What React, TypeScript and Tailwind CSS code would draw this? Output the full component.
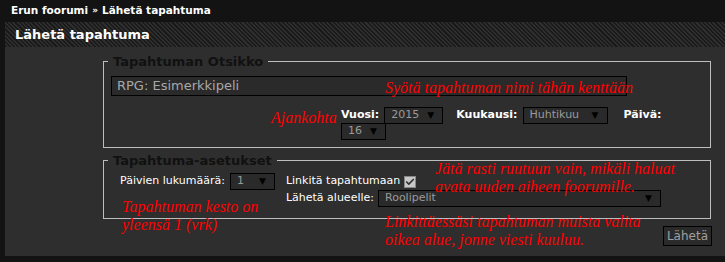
import { Check } from "lucide-react";

const SANS = "font-['DejaVu_Sans',Verdana,sans-serif]";
const NOTE = "absolute font-['Liberation_Serif',serif] italic text-[16px] leading-[18px] text-[#ff0000] whitespace-nowrap";

function Select({ value, width }: { value: string; width: string }) {
  return (
    <div
      className={`${width} h-[17px] flex items-center justify-between pl-1.5 pr-2 bg-[#2a2a2a] border border-black text-[11px] font-normal text-[#9a9a9a] ${SANS}`}
    >
      <span>{value}</span>
      <span className="text-[9px] text-black">▼</span>
    </div>
  );
}

export default function App() {
  return (
    <div className={`relative w-[725px] h-[262px] bg-[#131313] overflow-hidden ${SANS}`}>
      {/* Breadcrumb */}
      <div className="h-[22px] flex items-center pl-[11px] text-[10.5px] font-bold text-white">
        Erun foorumi <span className="mx-1 text-[9px]">»</span> Lähetä tapahtuma
      </div>

      <div className="ml-[5px]">
        {/* Header */}
        <div className="h-[25px] flex items-center pl-[10px] text-[13px] font-bold text-white bg-[repeating-linear-gradient(45deg,#1a1a1a_0px,#1a1a1a_1.5px,#2e2e2e_1.5px,#2e2e2e_3px)]">
          Lähetä tapahtuma
        </div>

        {/* Content */}
        <div className="h-[209px] bg-[#2e2e2e] pt-[7px] pl-[98px] pr-[14px]">
          <fieldset className="border border-[#bdbdbd] pl-[7px] pr-[8px] pb-[5px] h-[94px]">
            <legend className="-ml-[3px] px-[5px] text-[13px] leading-[15px] font-bold text-[#111]">
              Tapahtuman Otsikko
            </legend>
            <div className="mt-[7px] w-[516px] h-[20px] flex items-center pl-[5px] bg-[#2a2a2a] border border-black text-[13px] text-[#a8a8a8]">
              RPG: Esimerkkipeli
            </div>
            <div className="ml-[230px] mt-[11px] flex items-center text-[11px] font-bold text-white">
              <span>Vuosi:</span>
              <div className="ml-[5px]"><Select value="2015" width="w-[59px]" /></div>
              <span className="ml-[13px]">Kuukausi:</span>
              <div className="ml-[5px]"><Select value="Huhtikuu" width="w-[85px]" /></div>
              <span className="ml-[16px]">Päivä:</span>
            </div>
            <div className="ml-[230px] mt-[-1px]">
              <Select value="16" width="w-[45px]" />
            </div>
          </fieldset>

          <fieldset className="mt-[5px] border border-[#bdbdbd] h-[66px] flex">
            <legend className="ml-[4px] px-[5px] text-[13px] leading-[15px] font-bold text-[#111]">
              Tapahtuma-asetukset
            </legend>
            <div className="flex w-full pt-[5px]">
              <div className="pl-[16px] flex items-center h-[17px] text-[11px] text-white">
                <span>Päivien lukumäärä:</span>
                <div className="ml-[5px]"><Select value="1" width="w-[45px]" /></div>
              </div>
              <div className="ml-[11px] flex flex-col text-[11px] text-white">
                <div className="flex items-center h-[17px]">
                  <span>Linkitä tapahtumaan</span>
                  <span className="ml-[4px] w-[12px] h-[12px] bg-[#c8c8c8] border border-[#888] flex items-center justify-center">
                    <Check size={10} strokeWidth={4} className="text-[#333]" />
                  </span>
                </div>
                <div className="flex items-center h-[17px]">
                  <span>Lähetä alueelle:</span>
                  <div className="ml-[4px]"><Select value="Roolipelit" width="w-[283px]" /></div>
                </div>
              </div>
            </div>
          </fieldset>

          <div className="flex justify-end mt-[7px] mr-[-1px]">
            <button className="h-[20px] px-[3px] bg-[#2a2a2a] border border-black text-[12px] text-[#a0a0a0]">
              Lähetä
            </button>
          </div>
        </div>
      </div>

      {/* Red annotations drawn over the form */}
      <div className={`${NOTE} left-[385px] top-[79px]`}>Syötä tapahtuman nimi tähän kenttään</div>
      <div className={`${NOTE} left-[271px] top-[109px]`}>Ajankohta</div>
      <div className={`${NOTE} left-[435px] top-[160px]`}>
        Jätä rasti ruutuun vain, mikäli haluat
        <br />
        avata uuden aiheen foorumille.
      </div>
      <div className={`${NOTE} left-[122px] top-[198px]`}>
        Tapahtuman kesto on
        <br />
        yleensä 1 (vrk)
      </div>
      <div className={`${NOTE} left-[385px] top-[213px]`}>
        Linkittäessäsi tapahtuman muista valita
        <br />
        oikea alue, jonne viesti kuuluu.
      </div>
    </div>
  );
}
